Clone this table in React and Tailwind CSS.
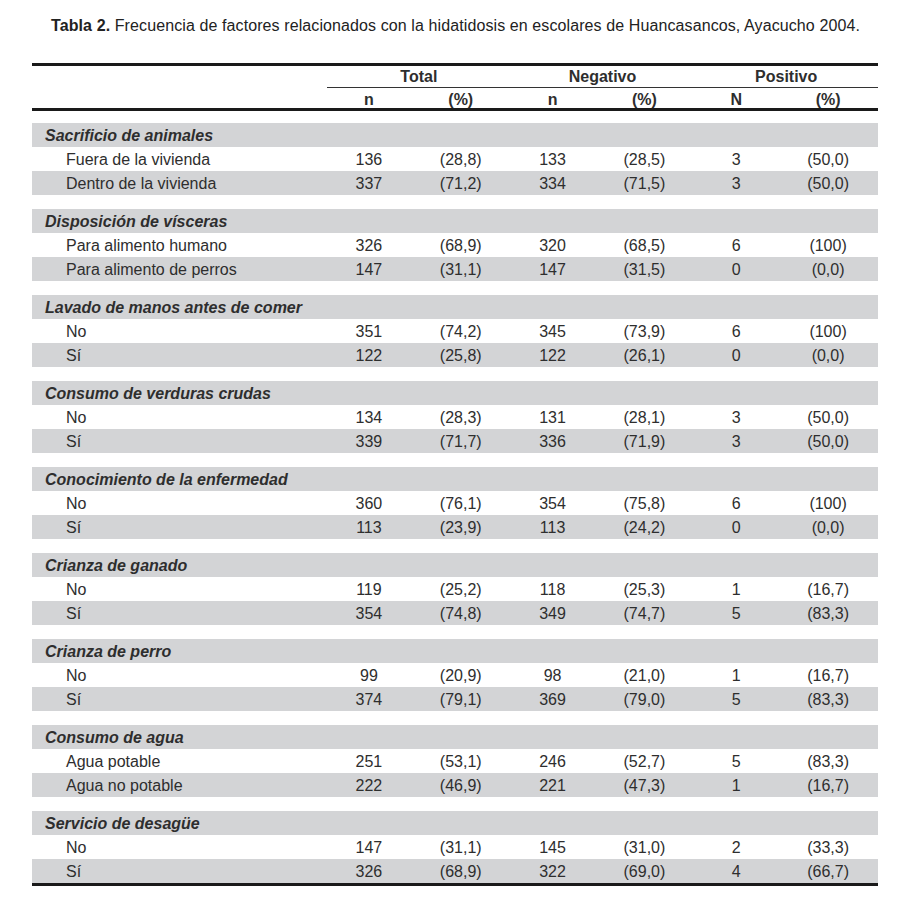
import React from "react";

const sections = [
  { title: "Sacrificio de animales", rows: [
    ["Fuera de la vivienda", "136", "(28,8)", "133", "(28,5)", "3", "(50,0)"],
    ["Dentro de la vivienda", "337", "(71,2)", "334", "(71,5)", "3", "(50,0)"],
  ]},
  { title: "Disposición de vísceras", rows: [
    ["Para alimento humano", "326", "(68,9)", "320", "(68,5)", "6", "(100)"],
    ["Para alimento de perros", "147", "(31,1)", "147", "(31,5)", "0", "(0,0)"],
  ]},
  { title: "Lavado de manos antes de comer", rows: [
    ["No", "351", "(74,2)", "345", "(73,9)", "6", "(100)"],
    ["Sí", "122", "(25,8)", "122", "(26,1)", "0", "(0,0)"],
  ]},
  { title: "Consumo de verduras crudas", rows: [
    ["No", "134", "(28,3)", "131", "(28,1)", "3", "(50,0)"],
    ["Sí", "339", "(71,7)", "336", "(71,9)", "3", "(50,0)"],
  ]},
  { title: "Conocimiento de la enfermedad", rows: [
    ["No", "360", "(76,1)", "354", "(75,8)", "6", "(100)"],
    ["Sí", "113", "(23,9)", "113", "(24,2)", "0", "(0,0)"],
  ]},
  { title: "Crianza de ganado", rows: [
    ["No", "119", "(25,2)", "118", "(25,3)", "1", "(16,7)"],
    ["Sí", "354", "(74,8)", "349", "(74,7)", "5", "(83,3)"],
  ]},
  { title: "Crianza de perro", rows: [
    ["No", "99", "(20,9)", "98", "(21,0)", "1", "(16,7)"],
    ["Sí", "374", "(79,1)", "369", "(79,0)", "5", "(83,3)"],
  ]},
  { title: "Consumo de agua", rows: [
    ["Agua potable", "251", "(53,1)", "246", "(52,7)", "5", "(83,3)"],
    ["Agua no potable", "222", "(46,9)", "221", "(47,3)", "1", "(16,7)"],
  ]},
  { title: "Servicio de desagüe", rows: [
    ["No", "147", "(31,1)", "145", "(31,0)", "2", "(33,3)"],
    ["Sí", "326", "(68,9)", "322", "(69,0)", "4", "(66,7)"],
  ]},
];

function Row({ cells, gray }) {
  return (
    <div className={`grid grid-cols-[295px_repeat(6,1fr)] h-[24px] items-center pt-[2px] ${gray ? "bg-[#d3d4d6]" : ""}`}>
      <div className="pl-[34px]">{cells[0]}</div>
      {cells.slice(1).map((c, i) => (
        <div key={i} className="text-center pr-[8px]">{c}</div>
      ))}
    </div>
  );
}

export default function App() {
  return (
    <div className="w-[900px] h-[904px] bg-white font-['Liberation_Sans',Arial,sans-serif] text-[#2e2e2e] text-[16px] leading-[20px]">
      <div className="pt-[16px] pl-[51px] h-[35px] text-[16px] leading-[20px] tracking-[0.1px] text-[#222] whitespace-nowrap">
        <span className="font-bold">Tabla 2.</span> Frecuencia de factores relacionados con la hidatidosis en escolares de Huancasancos, Ayacucho 2004.
      </div>
      <div className="ml-[32px] w-[846px] mt-[28px]">
        <div className="h-[3px] bg-[#1a1a1a]" />
        <div className="grid grid-cols-[295px_1fr_1fr_1fr] h-[21px] items-center font-bold">
          <div />
          <div className="text-center">Total</div>
          <div className="text-center">Negativo</div>
          <div className="text-center">Positivo</div>
        </div>
        <div className="ml-[295px] h-[1px] bg-[#333]" />
        <div className="grid grid-cols-[295px_repeat(6,1fr)] h-[20px] items-center font-bold pt-[2px]">
          <div />
          <div className="text-center pr-[8px]">n</div>
          <div className="text-center pr-[8px]">(%)</div>
          <div className="text-center pr-[8px]">n</div>
          <div className="text-center pr-[8px]">(%)</div>
          <div className="text-center pr-[8px]">N</div>
          <div className="text-center pr-[8px]">(%)</div>
        </div>
        <div className="h-[3px] bg-[#1a1a1a]" />
        <div className="flex flex-col gap-[14px] mt-[12px]">
          {sections.map((s, idx) => (
            <div key={idx} className="flex flex-col">
              <div className="h-[24px] bg-[#d3d4d6] flex items-center pl-[13px] pt-[1px] font-bold italic">{s.title}</div>
              <Row cells={s.rows[0]} gray={false} />
              <Row cells={s.rows[1]} gray={true} />
            </div>
          ))}
        </div>
        <div className="h-[3px] bg-[#1a1a1a]" />
      </div>
    </div>
  );
}
